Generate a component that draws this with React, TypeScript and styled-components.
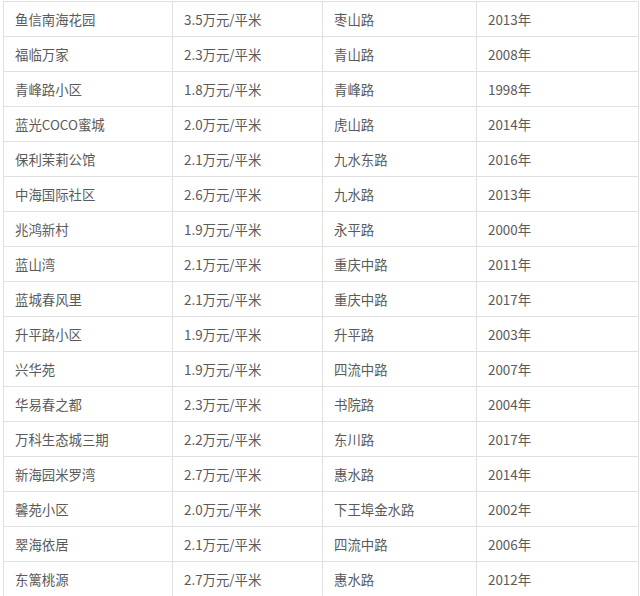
import styled, { createGlobalStyle } from "styled-components";

const GlobalStyle = createGlobalStyle`
  html, body {
    margin: 0;
    padding: 0;
    background: #ffffff;
  }
  body {
    font-family: "Noto Sans CJK SC", "Noto Sans", sans-serif;
  }
`;

const Page = styled.div`
  padding: 1px 2px 0 3px;
  width: 640px;
  box-sizing: border-box;
`;

const Table = styled.table`
  width: 635px;
  border-collapse: collapse;
  table-layout: fixed;
`;

const Cell = styled.td<{ $w: number }>`
  width: ${(p) => p.$w}px;
  height: 34px;
  padding: 0 0 0 11px;
  border: 1px solid #e0e0e0;
  color: #5a5a5a;
  font-size: 13.4px;
  line-height: 34px;
  white-space: nowrap;
  box-sizing: border-box;
`;

const widths = [169, 150, 154, 162];

const rows: string[][] = [
  ["鱼信南海花园", "3.5万元/平米", "枣山路", "2013年"],
  ["福临万家", "2.3万元/平米", "青山路", "2008年"],
  ["青峰路小区", "1.8万元/平米", "青峰路", "1998年"],
  ["蓝光COCO蜜城", "2.0万元/平米", "虎山路", "2014年"],
  ["保利茉莉公馆", "2.1万元/平米", "九水东路", "2016年"],
  ["中海国际社区", "2.6万元/平米", "九水路", "2013年"],
  ["兆鸿新村", "1.9万元/平米", "永平路", "2000年"],
  ["蓝山湾", "2.1万元/平米", "重庆中路", "2011年"],
  ["蓝城春风里", "2.1万元/平米", "重庆中路", "2017年"],
  ["升平路小区", "1.9万元/平米", "升平路", "2003年"],
  ["兴华苑", "1.9万元/平米", "四流中路", "2007年"],
  ["华易春之都", "2.3万元/平米", "书院路", "2004年"],
  ["万科生态城三期", "2.2万元/平米", "东川路", "2017年"],
  ["新海园米罗湾", "2.7万元/平米", "惠水路", "2014年"],
  ["馨苑小区", "2.0万元/平米", "下王埠金水路", "2002年"],
  ["翠海依居", "2.1万元/平米", "四流中路", "2006年"],
  ["东篱桃源", "2.7万元/平米", "惠水路", "2012年"],
];

export default function App() {
  return (
    <>
      <GlobalStyle />
      <Page>
        <Table>
          <tbody>
            {rows.map((row, i) => (
              <tr key={i}>
                {row.map((text, j) => (
                  <Cell key={j} $w={widths[j]}>
                    {text}
                  </Cell>
                ))}
              </tr>
            ))}
          </tbody>
        </Table>
      </Page>
    </>
  );
}
